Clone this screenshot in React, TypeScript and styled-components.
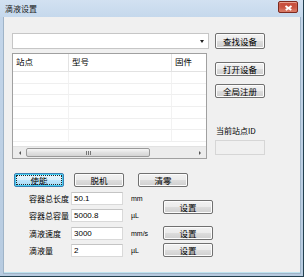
import React from 'react';
import styled, { createGlobalStyle, css } from 'styled-components';

const GlobalStyle = createGlobalStyle`
  html, body {
    margin: 0;
    padding: 0;
    background: #ffffff;
  }
  body {
    font-family: "Noto Sans CJK SC", "DejaVu Sans", sans-serif;
    font-size: 9px;
    color: #000;
  }
`;

const Window = styled.div`
  width: 304px;
  height: 277px;
  box-sizing: border-box;
  display: flex;
  flex-direction: column;
  background: linear-gradient(#c4d6ea, #b7cbe0);
  border-right: 1px solid #23404f;
  border-bottom: 1px solid #23404f;
  padding: 0 2px 2px 3px;
`;

const TitleBar = styled.div`
  height: 17px;
  display: flex;
  align-items: center;
  justify-content: space-between;
  margin: 0 -2px 0 -3px;
  padding: 0 5px 0 5px;
  background: linear-gradient(#d2e1f1, #c5d8ec);
`;

const Title = styled.span`
  font-size: 8px;
  line-height: 1;
  color: #1a1a1a;
`;

const CloseButton = styled.span`
  position: relative;
  display: block;
  width: 20px;
  height: 12px;
  margin-top: -3px;
  box-sizing: border-box;
  border: 1px solid #7d2a20;
  border-radius: 2px;
  background: #c8503f;
  box-shadow: inset 0 1px 0 #e8a090, inset 0 -3px 3px #d97a66;

  &::before,
  &::after {
    content: '';
    position: absolute;
    left: 5.5px;
    top: 4.5px;
    width: 7px;
    height: 1.5px;
    background: #ffffff;
  }
  &::before {
    transform: rotate(35deg);
  }
  &::after {
    transform: rotate(-35deg);
  }
`;

const Client = styled.div`
  flex: 1;
  background: #f0f0f0;
  border: 1px solid #9fb4c8;
  border-top: none;
  box-shadow: inset 0 -1px 0 #bfe3ef;
  padding: 16px 0 0 8px;
  display: flex;
  flex-direction: column;
`;

const TopSection = styled.div`
  display: flex;
  gap: 6px;
`;

const LeftColumn = styled.div`
  width: 197px;
  display: flex;
  flex-direction: column;
  gap: 4px;
`;

const RightColumn = styled.div`
  width: 50px;
  display: flex;
  flex-direction: column;
`;

const Combo = styled.div`
  height: 16px;
  box-sizing: border-box;
  background: #fff;
  border: 1px solid #c6c6c6;
  display: flex;
  align-items: center;
  justify-content: flex-end;
  padding-right: 4px;
`;

const ComboArrow = styled.div`
  width: 0;
  height: 0;
  border-left: 2.5px solid transparent;
  border-right: 2.5px solid transparent;
  border-top: 3px solid #222;
`;

const List = styled.div`
  width: 195px;
  height: 106px;
  box-sizing: border-box;
  background: #fff;
  border: 1px solid #a0a0a0;
  display: flex;
  flex-direction: column;
  overflow: hidden;
`;

const ListHeader = styled.div`
  height: 17px;
  flex-shrink: 0;
  display: grid;
  grid-template-columns: 56px 103px 1fr;
  border-bottom: 1px solid #e2e2e2;
`;

const HeaderCell = styled.div<{ $last?: boolean }>`
  padding: 2px 0 0 3px;
  font-size: 8.5px;
  line-height: 11px;
  border-right: ${(p) => (p.$last ? 'none' : '1px solid #e3e3e3')};
`;

const ListBody = styled.div`
  flex: 1;
  display: grid;
  grid-template-columns: 56px 103px 1fr;
  grid-auto-rows: 11.7px;
  overflow: hidden;
`;

const BodyCell = styled.div<{ $last?: boolean }>`
  border-bottom: 1px solid #efefef;
  border-right: ${(p) => (p.$last ? 'none' : '1px solid #f2f2f2')};
  box-sizing: border-box;
`;

const ScrollBar = styled.div`
  height: 11px;
  flex-shrink: 0;
  background: #ececec;
  border-top: 1px solid #e2e2e2;
  display: flex;
  align-items: center;
  padding: 0 2px;
  gap: 2px;
`;

const ScrollArrow = styled.div<{ $dir: 'left' | 'right' }>`
  width: 9px;
  display: flex;
  justify-content: center;
  &::after {
    content: '';
    width: 0;
    height: 0;
    border-top: 2px solid transparent;
    border-bottom: 2px solid transparent;
    ${(p) => (p.$dir === 'left'
    ? css`border-right: 2px solid #555;`
    : css`border-left: 2px solid #555;`)}
  }
`;

const ScrollSpacer = styled.div`
  flex: 1;
`;

const Thumb = styled.div`
  width: 124px;
  height: 9px;
  box-sizing: border-box;
  border: 1px solid #9a9a9a;
  border-radius: 2px;
  background: linear-gradient(#f6f6f6, #e2e2e2 50%, #d4d4d4);
  display: flex;
  align-items: center;
  justify-content: center;
  gap: 1px;
`;

const Grip = styled.span`
  width: 1px;
  height: 4px;
  background: #777;
`;

const Button = styled.button<{ $h?: number; $focused?: boolean; $mt?: number; $ml?: number }>`
  width: 50px;
  height: ${(p) => p.$h ?? 14}px;
  box-sizing: border-box;
  padding: 0;
  margin: ${(p) => p.$mt ?? 0}px 0 0 ${(p) => p.$ml ?? 0}px;
  font-family: inherit;
  font-size: 8.5px;
  line-height: 1;
  color: #000;
  border: 1px solid #707070;
  border-radius: 2px;
  background: linear-gradient(#f2f2f2, #ebebeb 50%, #dddddd 51%, #cfcfcf);
  box-shadow: inset 0 0 0 1px #fcfcfc;
  display: flex;
  align-items: center;
  justify-content: center;
  ${(p) => p.$focused && css`
    border-color: #3c7fb1;
    box-shadow: inset 0 0 0 1px #48d0f5;
    outline: 1px dotted #222;
    outline-offset: -3px;
    background: linear-gradient(#eaf6fd, #d9f0fc 50%, #bee6fd 51%, #a7d9f5);
  `}
`;

const SideLabel = styled.div`
  margin-top: 27px;
  padding-left: 1px;
  font-size: 8px;
  line-height: 11px;
  white-space: nowrap;
`;

const IdBox = styled.div`
  margin-top: 4px;
  height: 15px;
  box-sizing: border-box;
  border: 1px solid #d6d6d6;
  background: #f0f0f0;
`;

const ActionRow = styled.div`
  display: flex;
  margin-top: 14px;
  margin-left: 2px;
`;

const Form = styled.div`
  display: grid;
  grid-template-columns: 42px 52px 40px 50px;
  grid-template-rows: repeat(4, 13px);
  row-gap: 4.3px;
  margin-top: 5px;
  margin-left: 17px;
  align-items: center;
`;

const FieldLabel = styled.div<{ $row: number }>`
  grid-row: ${(p) => p.$row};
  grid-column: 1;
  white-space: nowrap;
  font-size: 8px;
  line-height: 11px;
`;

const Input = styled.div<{ $row: number }>`
  grid-row: ${(p) => p.$row};
  grid-column: 2;
  height: 13px;
  box-sizing: border-box;
  background: #fff;
  border: 1px solid #d9d9d9;
  border-top-color: #c4c4c4;
  padding-left: 2px;
  line-height: 11px;
  font-family: "Liberation Sans", sans-serif;
  font-size: 8px;
`;

const Unit = styled.div<{ $row: number }>`
  grid-row: ${(p) => p.$row};
  grid-column: 3;
  padding-left: 8px;
  font-family: "Liberation Sans", sans-serif;
  font-size: 7px;
  line-height: 11px;
`;

const SetCell = styled.div<{ $row: number; $span?: number }>`
  grid-row: ${(p) => p.$row} / span ${(p) => p.$span ?? 1};
  grid-column: 4;
  display: flex;
  align-items: center;
`;

const rows = [
  { label: '容器总长度', value: '50.1', unit: 'mm' },
  { label: '容器总容量', value: '5000.8', unit: 'µL' },
  { label: '滴液速度', value: '3000', unit: 'mm/s' },
  { label: '滴液量', value: '2', unit: 'µL' },
];

const App = () => (
  <>
    <GlobalStyle />
    <Window>
      <TitleBar>
        <Title>滴液设置</Title>
        <CloseButton />
      </TitleBar>
      <Client>
        <TopSection>
          <LeftColumn>
            <Combo>
              <ComboArrow />
            </Combo>
            <List>
              <ListHeader>
                <HeaderCell>站点</HeaderCell>
                <HeaderCell>型号</HeaderCell>
                <HeaderCell $last>固件</HeaderCell>
              </ListHeader>
              <ListBody>
                {Array.from({ length: 18 }).map((_, i) => (
                  // eslint-disable-next-line react/no-array-index-key
                  <BodyCell key={i} $last={i % 3 === 2} />
                ))}
              </ListBody>
              <ScrollBar>
                <ScrollArrow $dir="left" />
                <Thumb>
                  <Grip />
                  <Grip />
                  <Grip />
                </Thumb>
                <ScrollSpacer />
                <ScrollArrow $dir="right" />
              </ScrollBar>
            </List>
          </LeftColumn>
          <RightColumn>
            <Button $h={16}>查找设备</Button>
            <Button $mt={13}>打开设备</Button>
            <Button $mt={8}>全局注册</Button>
            <SideLabel>当前站点ID</SideLabel>
            <IdBox />
          </RightColumn>
        </TopSection>
        <ActionRow>
          <Button $focused>使能</Button>
          <Button $ml={10}>脱机</Button>
          <Button $ml={14}>清零</Button>
        </ActionRow>
        <Form>
          {rows.map((r, i) => (
            <React.Fragment key={r.label}>
              <FieldLabel $row={i + 1}>{r.label}</FieldLabel>
              <Input $row={i + 1}>{r.value}</Input>
              <Unit $row={i + 1}>{r.unit}</Unit>
            </React.Fragment>
          ))}
          <SetCell $row={1} $span={2}>
            <Button>设置</Button>
          </SetCell>
          <SetCell $row={3}>
            <Button>设置</Button>
          </SetCell>
          <SetCell $row={4}>
            <Button>设置</Button>
          </SetCell>
        </Form>
      </Client>
    </Window>
  </>
);

export default App;
